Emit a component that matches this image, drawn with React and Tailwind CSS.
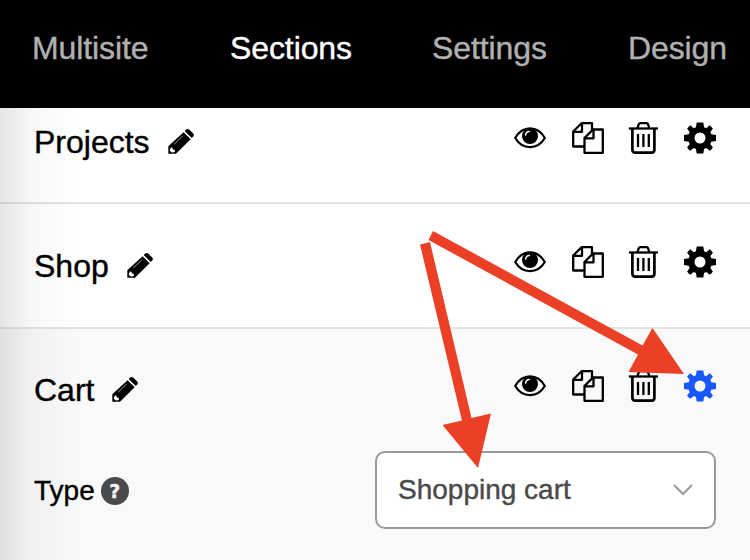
const navItems = [
    { label: 'Multisite', width: 'w-[198px]' },
    { label: 'Sections', width: 'w-[202px]', active: true },
    { label: 'Settings', width: 'w-[196px]' },
    { label: 'Design', width: 'w-[110px]' },
];

function PencilIcon() {
    return (
        <svg viewBox="0 0 26 26" className="relative top-1 w-[26px] h-[26px] shrink-0" fill="currentColor">
            <path d="M15.600 3.200 22.600 10.200 8 24.700H.3V17.200Z" />
            <path d="M16.700 2.100 18.200.600q1.500-1.200 3 0l4 4q1.400 1.500 0 3L23.700 9.100Z" />
            <path d="M6 15.200 14.800 7" stroke="#aaa" strokeWidth="0.9" />
            <path d="m2.900 18.400 1.500.4.600 1.700 1.700.5.400 1.400-1.700 1-2.100-.2-1.600-1.700Z" fill="#fff" />
        </svg>
    );
}

function EyeIcon() {
    return (
        <svg viewBox="0 0 32 32" className="w-8 h-8" fill="none">
            <path d="M1.200 16C8.500 3.200 23.500 3.200 30.800 16C23.500 28.200 8.500 28.200 1.200 16Z" stroke="currentColor" strokeWidth="2.200" strokeLinejoin="round" />
            <circle cx="16" cy="14" r="8" fill="currentColor" />
            <path d="M11.700 13Q12 9.600 15.300 9.400" stroke="#fff" strokeWidth="1.500" strokeLinecap="round" />
        </svg>
    );
}

function CopyIcon() {
    return (
        <svg viewBox="0 0 32 32" className="w-8 h-8" fill="none" stroke="currentColor" strokeWidth="2.300" strokeLinejoin="round">
            <path d="M12.500 24.500H1.200V9.500L9.500 1.200H20V8M10 1.500V9.800H1.500" />
            <path d="M12.500 30.800V16L21 7.500H30.800V30.800ZM21.500 8V16.300H13" />
        </svg>
    );
}

function TrashIcon() {
    return (
        <svg viewBox="-0.700 0 32 32" className="w-8 h-8" fill="none" stroke="currentColor" strokeWidth="2.300">
            <path d="M.2 6.500H29.200" />
            <path d="M8.800 6 10 2.300Q10.400 1.200 11.700 1.200H17.700Q19 1.200 19.400 2.300L20.600 6" />
            <path d="M3.700 7V27.800Q3.700 30.600 6.500 30.600H23Q25.700 30.600 25.700 27.800V7" strokeWidth="2.700" />
            <path d="M9.300 12V25M14.700 12V25M20.100 12V25" />
        </svg>
    );
}

function GearIcon() {
    return (
        <svg viewBox="0 0 32 32" className="w-8 h-8" fill="currentColor">
            <path fillRule="evenodd" d="M12.700.600h6.600l.8 4.700 2.100.9 3.500-2.900q2 1.500 3.200 3.500L26.300 10l1 2.300 4.700.700v6l-4.700.8-1 2.300 2.600 3.300q-1.200 2-3.200 3.400l-3.500-2.800-2.100.900-.8 4.600h-6.600l-.8-4.600-2.100-.9-3.500 2.800q-2-1.400-3.200-3.400l2.600-3.300-1-2.300L0 19v-6l4.700-.7 1-2.300-2.600-3.200q1.200-2 3.200-3.500l3.500 2.900 2.100-.9ZM16 10.500a5.500 5.500 0 1 0 0 11a5.500 5.500 0 1 0 0-11Z" />
        </svg>
    );
}

function SectionRow({ name, active }) {
    return (
        <div className="flex h-[60px] items-center justify-between pl-[34px] pr-[34px]">
            <div className="flex items-center gap-[18px]">
                <span className="relative top-1 text-[32px] leading-none">{name}</span>
                <PencilIcon />
            </div>
            <div className="flex items-center">
                <EyeIcon />
                <span className="ml-[26px]"><CopyIcon /></span>
                <span className="ml-6"><TrashIcon /></span>
                <span className={active ? 'ml-6 text-[#1857fb]' : 'ml-6'}><GearIcon /></span>
            </div>
        </div>
    );
}

export default function App() {
    return (
        <div className="relative flex h-[560px] w-[750px] flex-col overflow-hidden bg-white font-['Liberation_Sans',Arial,sans-serif] text-black [-webkit-text-stroke:0.4px]">
            <nav className="flex h-[108px] shrink-0 bg-black pl-8 pt-8">
                {navItems.map((item) => (
                    <a key={item.label} className={`${item.width} shrink-0 text-[32px] leading-8 tracking-[-0.1px] ${item.active ? 'text-white' : 'text-[#b0b0b0]'}`}>
                        {item.label}
                    </a>
                ))}
            </nav>

            <section className="h-24 shrink-0 border-b-2 border-[#e3e3e3]">
                <SectionRow name="Projects" />
            </section>
            <section className="h-[125px] shrink-0 border-b-2 border-[#e3e3e3] pt-7">
                <SectionRow name="Shop" />
            </section>
            <section className="flex-1 bg-[#f9f9f9] pt-[27px]">
                <SectionRow name="Cart" active />
                <div className="mt-[35px] flex items-center justify-between pl-[34px] pr-[34px]">
                    <div className="flex items-center gap-1.5 pt-0.5">
                        <span className="text-[28px] leading-8">Type</span>
                        <span className="flex h-7 w-7 items-center justify-center rounded-full bg-[#4a4a4a] font-['DejaVu_Sans',sans-serif] text-[19px] font-bold text-[#f8f8f8]">?</span>
                    </div>
                    <div className="flex h-[78px] w-[341px] items-center justify-between rounded-[10px] border-2 border-[#999] bg-white pl-[21px] pr-[21px]">
                        <span className="text-[28px] leading-8 text-[#4a4a4a]">Shopping cart</span>
                        <svg viewBox="0 0 20 12" className="h-3 w-5" fill="none" stroke="#999" strokeWidth="2">
                            <path d="m1 1 9 9 9-9" />
                        </svg>
                    </div>
                </div>
            </section>

            {/* Edge shading along the panel */}
            <div className="pointer-events-none absolute bottom-0 left-0 top-[108px] w-20 bg-linear-to-r from-black/10 via-black/3 via-40% to-transparent" />

            {/* Pointer arrows */}
            <svg viewBox="0 0 750 560" className="pointer-events-none absolute inset-0 h-full w-full" fill="#eb4026">
                <path d="M433 231 642.500 345.500 652.500 328 684 374 628.500 372 638 354.500 428.500 240Z" />
                <path d="M430 242 471.500 418 491 413.500 478 468 442.500 425 462 420.500 420 244.500Z" />
            </svg>
        </div>
    );
}
